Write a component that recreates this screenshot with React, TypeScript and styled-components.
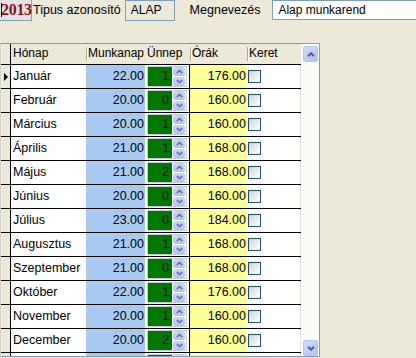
import React from "react";
import styled, { createGlobalStyle } from "styled-components";

type Month = {
  name: string;
  days: string;
  holiday: number;
  hours: string;
};

const months: Month[] = [
  { name: "Január", days: "22.00", holiday: 1, hours: "176.00" },
  { name: "Február", days: "20.00", holiday: 0, hours: "160.00" },
  { name: "Március", days: "20.00", holiday: 1, hours: "160.00" },
  { name: "Április", days: "21.00", holiday: 1, hours: "168.00" },
  { name: "Május", days: "21.00", holiday: 2, hours: "168.00" },
  { name: "Június", days: "20.00", holiday: 0, hours: "160.00" },
  { name: "Július", days: "23.00", holiday: 0, hours: "184.00" },
  { name: "Augusztus", days: "21.00", holiday: 1, hours: "168.00" },
  { name: "Szeptember", days: "21.00", holiday: 0, hours: "168.00" },
  { name: "Október", days: "22.00", holiday: 1, hours: "176.00" },
  { name: "November", days: "20.00", holiday: 1, hours: "160.00" },
  { name: "December", days: "20.00", holiday: 2, hours: "160.00" },
];

const GlobalStyle = createGlobalStyle`
  html, body {
    margin: 0;
    padding: 0;
    background: #ece9d8;
  }
  body {
    font-family: "Liberation Sans", Arial, sans-serif;
    font-size: 12px;
    color: #000;
  }
`;

const Page = styled.div`
  width: 416px;
  height: 358px;
  overflow: hidden;
  background: #ece9d8;
`;

const TopBar = styled.div`
  display: flex;
  align-items: flex-start;
  height: 21px;
`;

const YearBox = styled.div`
  position: relative;
  box-sizing: border-box;
  width: 32px;
  height: 21px;
  background: #e3e3e3;
  border-right: 1px solid #7f9db9;
  border-bottom: 1px solid #7f9db9;
  font-family: "Liberation Serif", "Times New Roman", serif;
  font-weight: bold;
  font-size: 16px;
  line-height: 20px;
  color: #8b1219;
  padding-left: 1px;
  letter-spacing: -0.3px;

  &::before {
    content: "";
    position: absolute;
    left: 1px;
    top: 3px;
    width: 1px;
    height: 14px;
    background: #000;
  }
`;

const FieldLabel = styled.div<{ $width: number; $offset?: number }>`
  box-sizing: border-box;
  width: ${(p) => p.$width}px;
  margin-left: ${(p) => p.$offset ?? 0}px;
  font-size: 12.5px;
  line-height: 20px;
  white-space: nowrap;
`;

const CodeBox = styled.div`
  box-sizing: border-box;
  width: 50px;
  height: 21px;
  border: 1px solid #7f9db9;
  background: #ece9d8;
  padding-left: 5px;
  line-height: 19px;
`;

const NameInput = styled.div`
  box-sizing: border-box;
  width: 144px;
  height: 20px;
  border: 1px solid #7f9db9;
  border-right: none;
  background: #fff;
  padding-left: 5px;
  line-height: 18px;
  white-space: nowrap;
`;

const Frame = styled.div`
  box-sizing: border-box;
  margin-top: 22px;
  width: 320px;
  height: 314px;
  border: 1px solid #7f9db9;
  border-left-color: #d4d0c8;
  display: flex;
  background: #fff;
`;

const Table = styled.div`
  width: 300px;
  overflow: hidden;
`;

const COLS = "10px 75px 59px 45px 57px 54px";

const HeaderRow = styled.div`
  display: grid;
  grid-template-columns: ${COLS};
  height: 20px;
  border-bottom: 1px solid #000;
  background: #ece9d8;
`;

const HeaderCell = styled.div<{ $sep?: boolean }>`
  position: relative;
  padding-left: 2px;
  line-height: 19px;
  white-space: nowrap;
  overflow: hidden;

  &::before {
    content: "";
    display: ${(p) => (p.$sep ? "block" : "none")};
    position: absolute;
    left: 0;
    top: 3px;
    width: 1px;
    height: 14px;
    background: #aca899;
    box-shadow: 1px 0 0 #fff;
  }
`;

const IndicatorHead = styled.div`
  border-right: 1px solid #000;
  border-left: 1px solid #f6f5ee;
  background: #ece9d8;
`;

const Row = styled.div`
  display: grid;
  grid-template-columns: ${COLS};
  height: 23px;
  border-bottom: 1px solid #000;
`;

const Indicator = styled.div`
  display: flex;
  align-items: center;
  padding-left: 2px;
  border-right: 1px solid #000;
  border-left: 1px solid #f6f5ee;
  background: #ece9d8;
`;

const Pointer = styled.div`
  width: 0;
  height: 0;
  border-top: 4px solid transparent;
  border-bottom: 4px solid transparent;
  border-left: 4px solid #000;
`;

const TextCell = styled.div<{ $bg?: string; $right?: boolean }>`
  background: ${(p) => p.$bg ?? "#fff"};
  text-align: ${(p) => (p.$right ? "right" : "left")};
  padding: ${(p) => (p.$right ? "0 1px 0 0" : "0 0 0 2px")};
  font-size: 12.5px;
  line-height: 23px;
  white-space: nowrap;
  overflow: hidden;
`;

const SpinCell = styled.div`
  box-sizing: border-box;
  background: #fff;
  border-right: 1px solid #000;
  padding: 1px 2px 1px 2px;
  display: flex;
`;

const Editor = styled.div`
  flex: 1;
  display: flex;
  border: 1px solid #c3cbd9;
`;

const GreenValue = styled.div`
  flex: 1;
  background: #007800;
  text-align: right;
  padding-right: 3px;
  font-size: 12.5px;
  line-height: 19px;
  color: #000;
`;

const Spinner = styled.div`
  width: 14px;
  display: flex;
  flex-direction: column;
  gap: 1px;
  background: #fff;
  padding: 0 1px 0 1px;
  box-sizing: border-box;
`;

const SpinButton = styled.div`
  flex: 1;
  display: flex;
  align-items: center;
  justify-content: center;
  border-radius: 2px;
  background: linear-gradient(#cad7fb, #b0c4f4);
`;

const CheckCell = styled.div`
  display: flex;
  align-items: center;
  padding-left: 1px;
  background: #fff;
  border-right: 1px solid #e4e4e0;
`;

const CheckBox = styled.div`
  box-sizing: border-box;
  width: 13px;
  height: 13px;
  border: 1px solid #1c5180;
  background: linear-gradient(135deg, #d6d6d0, #ffffff);
`;

const ScrollBar = styled.div`
  width: 18px;
  background: #fbfbf6;
  display: flex;
  flex-direction: column;
  justify-content: space-between;
  padding: 2px 0 0 2px;
  box-sizing: border-box;
`;

const ScrollButton = styled.div`
  box-sizing: border-box;
  width: 15px;
  height: 16px;
  border: 1px solid #b4c8f6;
  border-radius: 2px;
  background: linear-gradient(135deg, #d2defd, #a9bff4);
  display: flex;
  align-items: center;
  justify-content: center;
`;

const Chevron = ({ up, size = 8, weight = 2 }: { up?: boolean; size?: number; weight?: number }) => (
  <svg width={size} height={Math.ceil(size / 2) + 1} viewBox="0 0 8 5">
    <path
      d={up ? "M1 4.2 L4 1.2 L7 4.2" : "M1 0.8 L4 3.8 L7 0.8"}
      fill="none"
      stroke="#4d6185"
      strokeWidth={weight}
    />
  </svg>
);

const Spin = ({ value }: { value?: number }) => (
  <SpinCell>
    <Editor>
      <GreenValue>{value}</GreenValue>
      <Spinner>
        <SpinButton>
          <Chevron up size={7} weight={1.5} />
        </SpinButton>
        <SpinButton>
          <Chevron size={7} weight={1.5} />
        </SpinButton>
      </Spinner>
    </Editor>
  </SpinCell>
);

export default function App() {
  return (
    <Page>
      <GlobalStyle />
      <TopBar>
        <YearBox>2013</YearBox>
        <FieldLabel $width={92} $offset={1}>
          Tipus azonosító
        </FieldLabel>
        <CodeBox>ALAP</CodeBox>
        <FieldLabel $width={83} $offset={15}>
          Megnevezés
        </FieldLabel>
        <NameInput>Alap munkarend</NameInput>
      </TopBar>
      <Frame>
        <Table>
          <HeaderRow>
            <IndicatorHead />
            <HeaderCell>Hónap</HeaderCell>
            <HeaderCell $sep>Munkanap</HeaderCell>
            <HeaderCell>Ünnep</HeaderCell>
            <HeaderCell $sep>Órák</HeaderCell>
            <HeaderCell $sep>Keret</HeaderCell>
          </HeaderRow>
          {months.map((m, i) => (
            <Row key={m.name}>
              <Indicator>{i === 0 && <Pointer />}</Indicator>
              <TextCell>{m.name}</TextCell>
              <TextCell $bg="#a6caf0" $right>
                {m.days}
              </TextCell>
              <Spin value={m.holiday} />
              <TextCell $bg="#ffff99" $right>
                {m.hours}
              </TextCell>
              <CheckCell>
                <CheckBox />
              </CheckCell>
            </Row>
          ))}
          <Row>
            <Indicator />
            <TextCell />
            <TextCell $bg="#a6caf0" />
            <Spin />
            <TextCell $bg="#ffff99" />
            <CheckCell />
          </Row>
        </Table>
        <ScrollBar>
          <ScrollButton>
            <Chevron up />
          </ScrollButton>
          <ScrollButton>
            <Chevron />
          </ScrollButton>
        </ScrollBar>
      </Frame>
    </Page>
  );
}
